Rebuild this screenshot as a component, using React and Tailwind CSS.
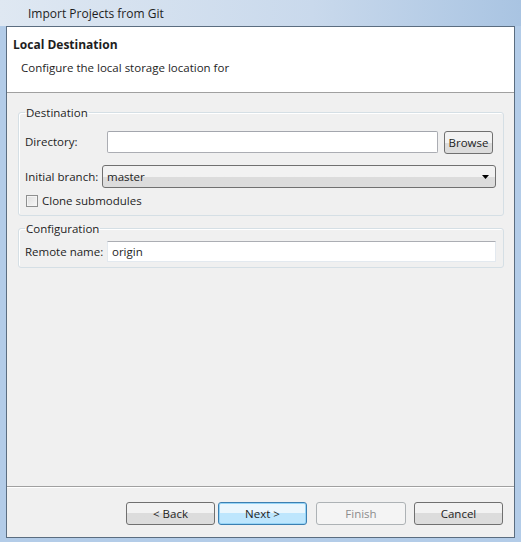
import React from 'react';

const font = { fontFamily: '"Open Sans", "Noto Sans", sans-serif' };

const WinButton = ({ children, variant = 'normal', className = '' }) => {
    const styles = {
        normal: 'border-[#707070] bg-gradient-to-b from-[#f2f2f2] from-50% to-[#dcdcdc] to-50% text-[#1e1e1e]',
        default: 'border-[#3c7fb1] bg-gradient-to-b from-[#eaf6fd] from-50% to-[#bee6fd] to-50% text-[#1e1e1e] shadow-[inset_0_0_0_1px_#97d5f7]',
        disabled: 'border-[#adb2b5] bg-[#f4f4f4] text-[#8d8d8d]',
    };
    return (
        <button className={`flex h-[23px] items-center justify-center rounded-[3px] border text-[11.5px] ${styles[variant]} ${className}`}>
            {children}
        </button>
    );
};

export default function App() {
    return (
        <div className="flex h-[542px] w-[521px] flex-col overflow-hidden bg-[#b3cce8] text-[11.5px] text-[#1e1e1e]" style={font}>
            {/* title bar */}
            <div className="flex h-[26px] shrink-0 items-center bg-gradient-to-r from-[#dfe8f2] via-[#c9d9ec] via-60% to-[#a9c4e2] pl-[28px] pt-[1px] text-[12px] text-[#1e1e1e]">
                Import Projects from Git
            </div>

            <div className="mx-[6px] mb-[4px] flex flex-1 flex-col border border-[#5b6d80] bg-[#f0f0f0]">
                {/* header */}
                <div className="flex h-[66px] shrink-0 flex-col border-b border-[#a0a0a0] bg-white pl-[6px]">
                    <div className="mt-[10px] text-[12px] font-bold leading-[16px]">Local Destination</div>
                    <div className="ml-[8px] mt-[7px] leading-[16px]">Configure the local storage location for</div>
                </div>

                {/* body */}
                <div className="flex flex-1 flex-col px-[10px] pl-[11px]">
                    <fieldset className="mt-[12px] rounded-[3px] border border-[#d5dfe5] pb-[7px] pl-[6px] pr-[7px] shadow-[inset_1px_1px_0_#ffffff]">
                        <legend className="px-[1px] leading-[15px]">Destination</legend>
                        <div className="mt-[9px] flex items-center">
                            <span className="w-[82px]">Directory:</span>
                            <div className="h-[22px] w-[331px] rounded-[2px] border border-[#abadb3] border-t-[#a3a6ad] bg-white" />
                            <WinButton className="ml-[6px] mt-[2px] w-[49px]">Browse</WinButton>
                        </div>
                        <div className="mt-[11px] flex items-center">
                            <span className="w-[77px]">Initial branch:</span>
                            <div className="flex h-[23px] flex-1 items-center justify-between rounded-[3px] border border-[#707070] bg-gradient-to-b from-[#f2f2f2] from-50% to-[#dcdcdc] to-50% pl-[4px] pr-[6px]">
                                <span>master</span>
                                <svg width="7" height="4" viewBox="0 0 7 4">
                                    <path d="M0 0h7L3.5 4z" fill="#000" />
                                </svg>
                            </div>
                        </div>
                        <div className="mt-[6px] flex items-center">
                            <div className="ml-[1px] h-[12px] w-[12px] border border-[#8e8f8f] bg-gradient-to-br from-[#dedede] to-[#f8f8f8] shadow-[inset_0_0_0_1px_#f4f4f4]" />
                            <span className="ml-[4px] leading-[14px]">Clone submodules</span>
                        </div>
                    </fieldset>

                    <fieldset className="mt-[5px] rounded-[3px] border border-[#d5dfe5] pb-[5px] pl-[6px] pr-[7px] shadow-[inset_1px_1px_0_#ffffff]">
                        <legend className="px-[1px] leading-[15px]">Configuration</legend>
                        <div className="mt-[5px] flex items-center">
                            <span className="w-[82px]">Remote name:</span>
                            <div className="flex h-[21px] flex-1 items-center border border-[#e3e9ef] border-t-[#abadb3] bg-white pl-[4px]">
                                origin
                            </div>
                        </div>
                    </fieldset>
                    <div className="flex-1" />
                </div>

                {/* button bar */}
                <div className="flex h-[51px] shrink-0 items-start justify-end border-t border-[#a0a0a0] pr-[11px] pt-[15px] shadow-[inset_0_1px_0_#ffffff]">
                    <WinButton className="w-[89px]">&lt; Back</WinButton>
                    <WinButton variant="default" className="ml-[3px] w-[89px]">Next &gt;</WinButton>
                    <WinButton variant="disabled" className="ml-[9px] w-[90px]">Finish</WinButton>
                    <WinButton className="ml-[8px] w-[89px]">Cancel</WinButton>
                </div>
            </div>
        </div>
    );
}
